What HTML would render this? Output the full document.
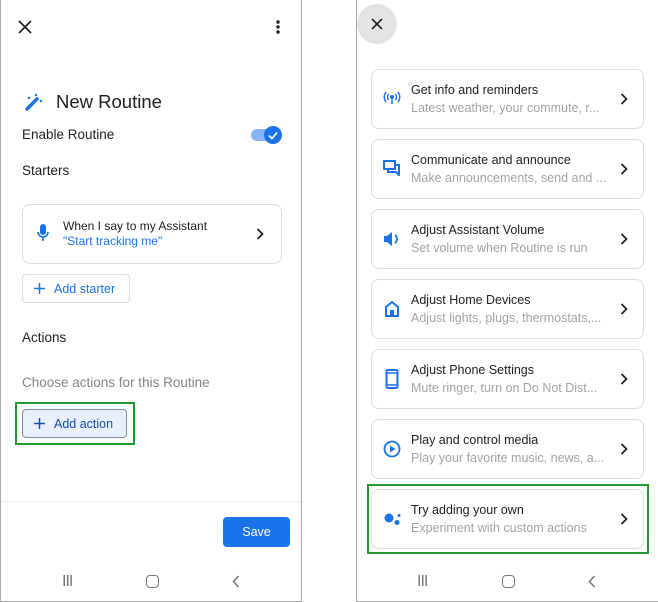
<!DOCTYPE html>
<html><head><meta charset="utf-8"><style>
*{margin:0;padding:0;box-sizing:border-box}
body{width:658px;height:602px;background:#fff;position:relative;font-family:"Liberation Sans",Arial,sans-serif;overflow:hidden}
.ph{position:absolute;top:0;height:602px;border:1px solid #a9a9a9;background:#fff}
.a{position:absolute}
.t{color:#202124;font-size:13.5px}
.card{position:absolute;left:14px;width:273px;height:60px;border:1px solid #dadce0;border-radius:8px}
.card .ti{position:absolute;left:39px;top:13px;font-size:12.5px;color:#202124}
.card .su{position:absolute;left:39px;top:31px;font-size:12.5px;color:#a0a4a8;white-space:nowrap}
.card .ic{position:absolute;left:11px;top:21px}
.chev{position:absolute;right:15px;top:23px}
.nav{position:absolute;top:573px;font-size:16px;color:#777}
</style></head><body>
<div class="ph" style="left:0;width:302px;border-top:none">
  <svg class="a" style="left:17px;top:20px" width="14" height="14" viewBox="0 0 14 14"><path d="M1 1L13 13M13 1L1 13" stroke="#202124" stroke-width="1.8"/></svg>
  <svg class="a" style="left:274px;top:19px" width="6" height="16"><circle cx="3" cy="3" r="1.7" fill="#202124"/><circle cx="3" cy="8" r="1.7" fill="#202124"/><circle cx="3" cy="13" r="1.7" fill="#202124"/></svg>
  <svg class="a" style="left:24px;top:92px" width="20" height="20" viewBox="0 0 20 20"><path d="M2 17L12 7" stroke="#1a73e8" stroke-width="3.5" stroke-linecap="round"/><path d="M3 5l2 2M5 5l-2 2M10 2l2 2M12 2l-2 2M15 8l2 2M17 8l-2 2" stroke="#1a73e8" stroke-width="1"/></svg>
  <div class="a" style="left:55px;top:91px;font-size:18.5px;color:#202124">New Routine</div>
  <div class="a t" style="left:21px;top:127px">Enable Routine</div>
  <div class="a" style="left:250px;top:129px;width:28px;height:12px;border-radius:6px;background:#8ab4f8"></div>
  <div class="a" style="left:263px;top:126px;width:18px;height:18px;border-radius:50%;background:#1a73e8"></div>
  <svg class="a" style="left:266px;top:129px" width="12" height="12"><path d="M2 6.5l3 3 5-6" stroke="#fff" stroke-width="1.7" fill="none"/></svg>
  <div class="a t" style="left:21px;top:163px">Starters</div>
  <div class="a" style="left:21px;top:204px;width:260px;height:60px;border:1px solid #dadce0;border-radius:8px">
    <svg class="a" style="left:14px;top:18px" width="12" height="20" viewBox="0 0 12 20"><rect x="3" y="1" width="6" height="11" rx="3" fill="#1a73e8"/><path d="M1 9a5 5 0 0 0 10 0M6 14v4" stroke="#1a73e8" stroke-width="1.6" fill="none"/></svg>
    <div class="a" style="left:40px;top:14px;font-size:12px;color:#202124">When I say to my Assistant</div>
    <div class="a" style="left:40px;top:29px;font-size:12px;color:#1a73e8">"Start tracking me"</div>
    <svg class="a" style="left:233px;top:23px" width="8" height="12"><path d="M1.5 1l5 5-5 5" stroke="#202124" stroke-width="1.8" fill="none"/></svg>
  </div>
  <div class="a" style="left:21px;top:274px;width:108px;height:29px;border:1px solid #dadce0;border-radius:4px">
    <svg class="a" style="left:11px;top:8px" width="11" height="11"><path d="M5.5 0v11M0 5.5h11" stroke="#1a73e8" stroke-width="1.5"/></svg>
    <div class="a" style="left:31px;top:7px;font-size:12.5px;color:#1a73e8">Add starter</div>
  </div>
  <div class="a t" style="left:21px;top:330px">Actions</div>
  <div class="a" style="left:21px;top:375px;font-size:13.5px;color:#80868b">Choose actions for this Routine</div>
  <div class="a" style="left:14px;top:402px;width:120px;height:43px;border:2.5px solid #1e9b2c"></div>
  <div class="a" style="left:21px;top:409px;width:105px;height:29px;border:1px solid #7c8fa8;border-radius:4px;background:#e8f0fe">
    <svg class="a" style="left:11px;top:8px" width="11" height="11"><path d="M5.5 0v11M0 5.5h11" stroke="#174ea6" stroke-width="1.5"/></svg>
    <div class="a" style="left:31px;top:7px;font-size:12.5px;color:#174ea6">Add action</div>
  </div>
  <div class="a" style="left:0;top:501px;width:300px;height:1px;background:#eee"></div>
  <div class="a" style="left:222px;top:517px;width:67px;height:30px;border-radius:4px;background:#1a73e8;color:#fff;font-size:12.5px;text-align:center;line-height:30px">Save</div>
  <div class="nav" style="left:61px;letter-spacing:-1px">III</div>
  <div class="a" style="left:145px;top:575px;width:13px;height:13px;border:1.8px solid #777;border-radius:4px"></div>
  <svg class="a" style="left:231px;top:575px" width="8" height="13"><path d="M6.5 1l-5 5.5 5 5.5" stroke="#777" stroke-width="1.5" fill="none"/></svg>
</div>

<div class="ph" style="left:356px;width:302px;border-top:none;border-right:none">
  <div class="a" style="left:0px;top:4px;width:40px;height:40px;border-radius:50%;background:#e3e3e3"></div>
  <svg class="a" style="left:14px;top:18px" width="12" height="12"><path d="M1 1L11 11M11 1L1 11" stroke="#202124" stroke-width="1.6"/></svg>

  <div class="card" style="top:69px"><svg class="ic" width="18" height="14" viewBox="0 0 18 14"><circle cx="9" cy="6" r="2" fill="#1a73e8"/><path d="M9 8v5M5.5 3a5 5 0 0 0 0 6M12.5 3a5 5 0 0 1 0 6M3 1a8 8 0 0 0 0 10M15 1a8 8 0 0 1 0 10" stroke="#1a73e8" stroke-width="1.4" fill="none"/></svg><div class="ti">Get info and reminders</div><div class="su">Latest weather, your commute, r...</div><svg class="chev" width="8" height="12"><path d="M1.5 1l5 5-5 5" stroke="#202124" stroke-width="1.8" fill="none"/></svg></div>
  <div class="card" style="top:139px"><svg class="ic" width="18" height="16" viewBox="0 0 18 16" style="top:20px"><path d="M1 1h11v8H1z M5 9v3h8l3 3V5h-4" stroke="#1a73e8" stroke-width="2" fill="none"/></svg><div class="ti">Communicate and announce</div><div class="su">Make announcements, send and ...</div><svg class="chev" width="8" height="12"><path d="M1.5 1l5 5-5 5" stroke="#202124" stroke-width="1.8" fill="none"/></svg></div>
  <div class="card" style="top:209px"><svg class="ic" width="18" height="16" viewBox="0 0 18 16"><path d="M1 5h3l5-4v14l-5-4H1z" fill="#1a73e8"/><path d="M12 4a5 5 0 0 1 0 8" stroke="#1a73e8" stroke-width="1.8" fill="none"/></svg><div class="ti">Adjust Assistant Volume</div><div class="su">Set volume when Routine is run</div><svg class="chev" width="8" height="12"><path d="M1.5 1l5 5-5 5" stroke="#202124" stroke-width="1.8" fill="none"/></svg></div>
  <div class="card" style="top:279px"><svg class="ic" width="16" height="16" viewBox="0 0 16 16" style="left:12px"><path d="M2 15V6l6-5 6 5v9z" stroke="#1a73e8" stroke-width="2" fill="none"/><rect x="6" y="9" width="4" height="6" fill="#1a73e8"/></svg><div class="ti">Adjust Home Devices</div><div class="su">Adjust lights, plugs, thermostats,...</div><svg class="chev" width="8" height="12"><path d="M1.5 1l5 5-5 5" stroke="#202124" stroke-width="1.8" fill="none"/></svg></div>
  <div class="card" style="top:349px"><svg class="ic" width="14" height="20" viewBox="0 0 14 20" style="left:13px;top:19px"><rect x="1.5" y="1" width="11" height="18" rx="1.5" stroke="#1a73e8" stroke-width="2" fill="none"/><path d="M2 4h10M2 16h10" stroke="#1a73e8" stroke-width="1.5"/></svg><div class="ti">Adjust Phone Settings</div><div class="su">Mute ringer, turn on Do Not Dist...</div><svg class="chev" width="8" height="12"><path d="M1.5 1l5 5-5 5" stroke="#202124" stroke-width="1.8" fill="none"/></svg></div>
  <div class="card" style="top:419px"><svg class="ic" width="18" height="18" viewBox="0 0 18 18" style="top:20px"><circle cx="9" cy="9" r="7.5" stroke="#1a73e8" stroke-width="1.8" fill="none"/><path d="M7 5.5v7l5.5-3.5z" fill="#1a73e8"/></svg><div class="ti">Play and control media</div><div class="su">Play your favorite music, news, a...</div><svg class="chev" width="8" height="12"><path d="M1.5 1l5 5-5 5" stroke="#202124" stroke-width="1.8" fill="none"/></svg></div>
  <div class="a" style="left:10px;top:484px;width:282px;height:70px;border:2.5px solid #1e9b2c"></div>
  <div class="card" style="top:489px"><svg class="ic" width="20" height="20" viewBox="0 0 20 20" style="top:19px"><circle cx="6" cy="9" r="4.5" fill="#1a73e8"/><circle cx="14" cy="13.5" r="2.5" fill="#1a73e8"/><circle cx="16" cy="6.5" r="1.5" fill="#1a73e8"/></svg><div class="ti">Try adding your own</div><div class="su">Experiment with custom actions</div><svg class="chev" width="8" height="12"><path d="M1.5 1l5 5-5 5" stroke="#202124" stroke-width="1.8" fill="none"/></svg></div>

  <div class="nav" style="left:60px;letter-spacing:-1px">III</div>
  <div class="a" style="left:145px;top:575px;width:13px;height:13px;border:1.8px solid #777;border-radius:4px"></div>
  <svg class="a" style="left:231px;top:575px" width="8" height="13"><path d="M6.5 1l-5 5.5 5 5.5" stroke="#777" stroke-width="1.5" fill="none"/></svg>
</div>
</body></html>
